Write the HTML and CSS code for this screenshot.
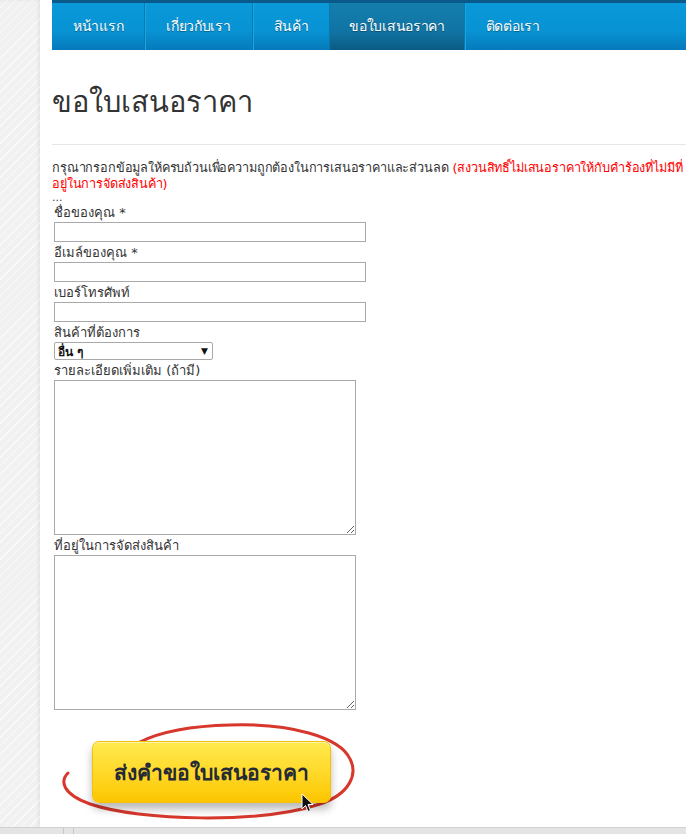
FILE: index.html
```html
<!DOCTYPE html>
<html>
<head>
  <meta charset="utf-8">
  <title>ขอใบเสนอราคา</title>
  <link rel="stylesheet" href="styles.css">
</head>
<body>
  <div class="side"></div>
  <div id="page">
    <ul class="nav">
      <li><a href="#">หน้าแรก</a></li>
      <li><a href="#">เกี่ยวกับเรา</a></li>
      <li><a href="#">สินค้า</a></li>
      <li class="active"><a href="#">ขอใบเสนอราคา</a></li>
      <li><a href="#">ติดต่อเรา</a></li>
    </ul>

    <h1>ขอใบเสนอราคา</h1>
    <hr>

    <p class="intro">กรุณากรอกข้อมูลให้ครบถ้วนเพื่อความถูกต้องในการเสนอราคาและส่วนลด <span class="warn">(สงวนสิทธิ์ไม่เสนอราคาให้กับคำร้องที่ไม่มีที่อยู่ในการจัดส่งสินค้า)</span></p>
    <div class="dots">...</div>

    <form class="quote">
      <label>ชื่อของคุณ *</label>
      <input type="text">
      <label>อีเมล์ของคุณ *</label>
      <input type="text">
      <label>เบอร์โทรศัพท์</label>
      <input type="text">
      <label>สินค้าที่ต้องการ</label>
      <div class="select"><span>อื่น ๆ</span><span class="arrow">▼</span></div>
      <label>รายละเอียดเพิ่มเติม (ถ้ามี)</label>
      <textarea></textarea>
      <label>ที่อยู่ในการจัดส่งสินค้า</label>
      <textarea></textarea>

      <div class="send-wrap">
        <svg class="circle" width="330" height="130" viewBox="0 0 330 130">
          <path d="M16,62 C8,70 10,83 38,93 C88,110 208,113 268,93 C298,83 306,63 298,48 C288,26 238,12 178,14 C138,15 108,21 88,31" fill="none" stroke="#d8382c" stroke-width="3" stroke-linecap="round"/>
        </svg>
        <button type="button" class="send">ส่งคำขอใบเสนอราคา</button>
        <svg class="cursor" width="14" height="20" viewBox="0 0 14 20">
          <path d="M1,1 L1,16 L4.5,12.5 L7,18.5 L9.5,17.5 L7,11.5 L12,11.5 Z" fill="#111" stroke="#fff" stroke-width="1"/>
        </svg>
      </div>
    </form>
  </div>
  <div class="statusbar"><span></span></div>
</body>
</html>
```

FILE: styles.css
```css
html, body {
  margin: 0;
  height: 100%;
}
body {
  font-family: Tahoma, "DejaVu Sans", sans-serif;
  font-size: 13px;
  color: #333;
  background: #fff;
  overflow: hidden;
}
.side {
  position: fixed;
  left: 0;
  top: 0;
  bottom: 0;
  width: 40px;
  background-color: #f1f1f1;
  background-image: repeating-linear-gradient(135deg, #f1f1f1 0, #f1f1f1 5px, #fafafa 5px, #fafafa 6px);
  box-shadow: inset -2px 0 3px rgba(0, 0, 0, 0.06);
}
#page {
  margin-left: 40px;
  padding-left: 12px;
}

/* top menu */
.nav {
  display: flex;
  list-style: none;
  margin: 0;
  padding: 0;
  height: 50px;
  border-top: 3px solid #0b5a8c;
  box-sizing: border-box;
  background: linear-gradient(#0a99d9, #0893d3 60%, #0679bb);
}
.nav li {
  border-right: 1px solid #0a78b0;
  box-shadow: 1px 0 0 #1aa6e2;
}
.nav li:last-child {
  border-right: none;
  box-shadow: none;
}
.nav a {
  display: block;
  line-height: 47px;
  padding: 0 21px;
  color: #fff;
  text-decoration: none;
  font-size: 14px;
  letter-spacing: -0.3px;
  text-shadow: 0 1px 1px rgba(0, 0, 0, 0.35);
}
.nav li.active {
  background: linear-gradient(#147ead, #1074a4 60%, #0b5b83);
}
.nav li.active a {
  padding: 0 19px;
}

h1 {
  font-size: 29px;
  font-weight: normal;
  color: #333;
  margin: 31px 0 0 0;
  line-height: 42px;
}
hr {
  border: none;
  border-top: 1px solid #e6e6e6;
  margin: 21px 0 0 0;
}
.intro {
  margin: 15px 0 0 0;
  line-height: 16px;
  font-size: 12.7px;
  letter-spacing: -0.16px;
}
.warn {
  color: #f00;
}
.dots {
  line-height: 12px;
  height: 12px;
  font-size: 11px;
  color: #444;
}

.quote {
  display: flex;
  flex-direction: column;
  align-items: flex-start;
  padding-left: 2px;
}
.quote label {
  display: block;
  line-height: 18px;
  height: 18px;
}
.quote input {
  width: 312px;
  height: 20px;
  box-sizing: border-box;
  border: 1px solid #a9a9a9;
  margin: 0 0 2px 0;
  padding: 0;
}
.select {
  display: flex;
  justify-content: space-between;
  align-items: center;
  width: 159px;
  height: 18px;
  box-sizing: border-box;
  border: 1px solid #a9a9a9;
  border-radius: 2px;
  padding: 0 4px 0 3px;
  margin-bottom: 2px;
  font-weight: bold;
  color: #111;
  font-size: 12px;
}
.select .arrow {
  font-size: 9px;
}
.quote textarea {
  width: 302px;
  height: 155px;
  box-sizing: border-box;
  border: 1px solid #a9a9a9;
  margin: 0 0 2px 0;
  resize: both;
}

.send-wrap {
  position: relative;
  margin: 29px 0 0 38px;
}
.circle {
  position: absolute;
  left: -40px;
  top: -30px;
}
.send {
  position: relative;
  width: 239px;
  height: 62px;
  border: 1px solid #f2c10a;
  border-radius: 7px;
  background: linear-gradient(#ffea4e, #ffd92a 50%, #fcc600);
  box-shadow: 0 6px 8px rgba(0, 0, 0, 0.28), inset 0 1px 0 rgba(255, 255, 255, 0.5);
  color: #242a36;
  font-family: Tahoma, "DejaVu Sans", sans-serif;
  font-size: 21px;
  font-weight: bold;
  cursor: pointer;
}
.cursor {
  position: absolute;
  left: 209px;
  top: 52px;
}

.statusbar {
  position: fixed;
  left: 0;
  right: 0;
  bottom: 0;
  height: 6px;
  background: #e4e4e4;
  border-top: 1px solid #d0d0d0;
}
.statusbar span {
  position: absolute;
  left: 63px;
  top: 0;
  bottom: 0;
  width: 9px;
  border-left: 1px solid #c8c8c8;
  border-right: 1px solid #c8c8c8;
}
```
